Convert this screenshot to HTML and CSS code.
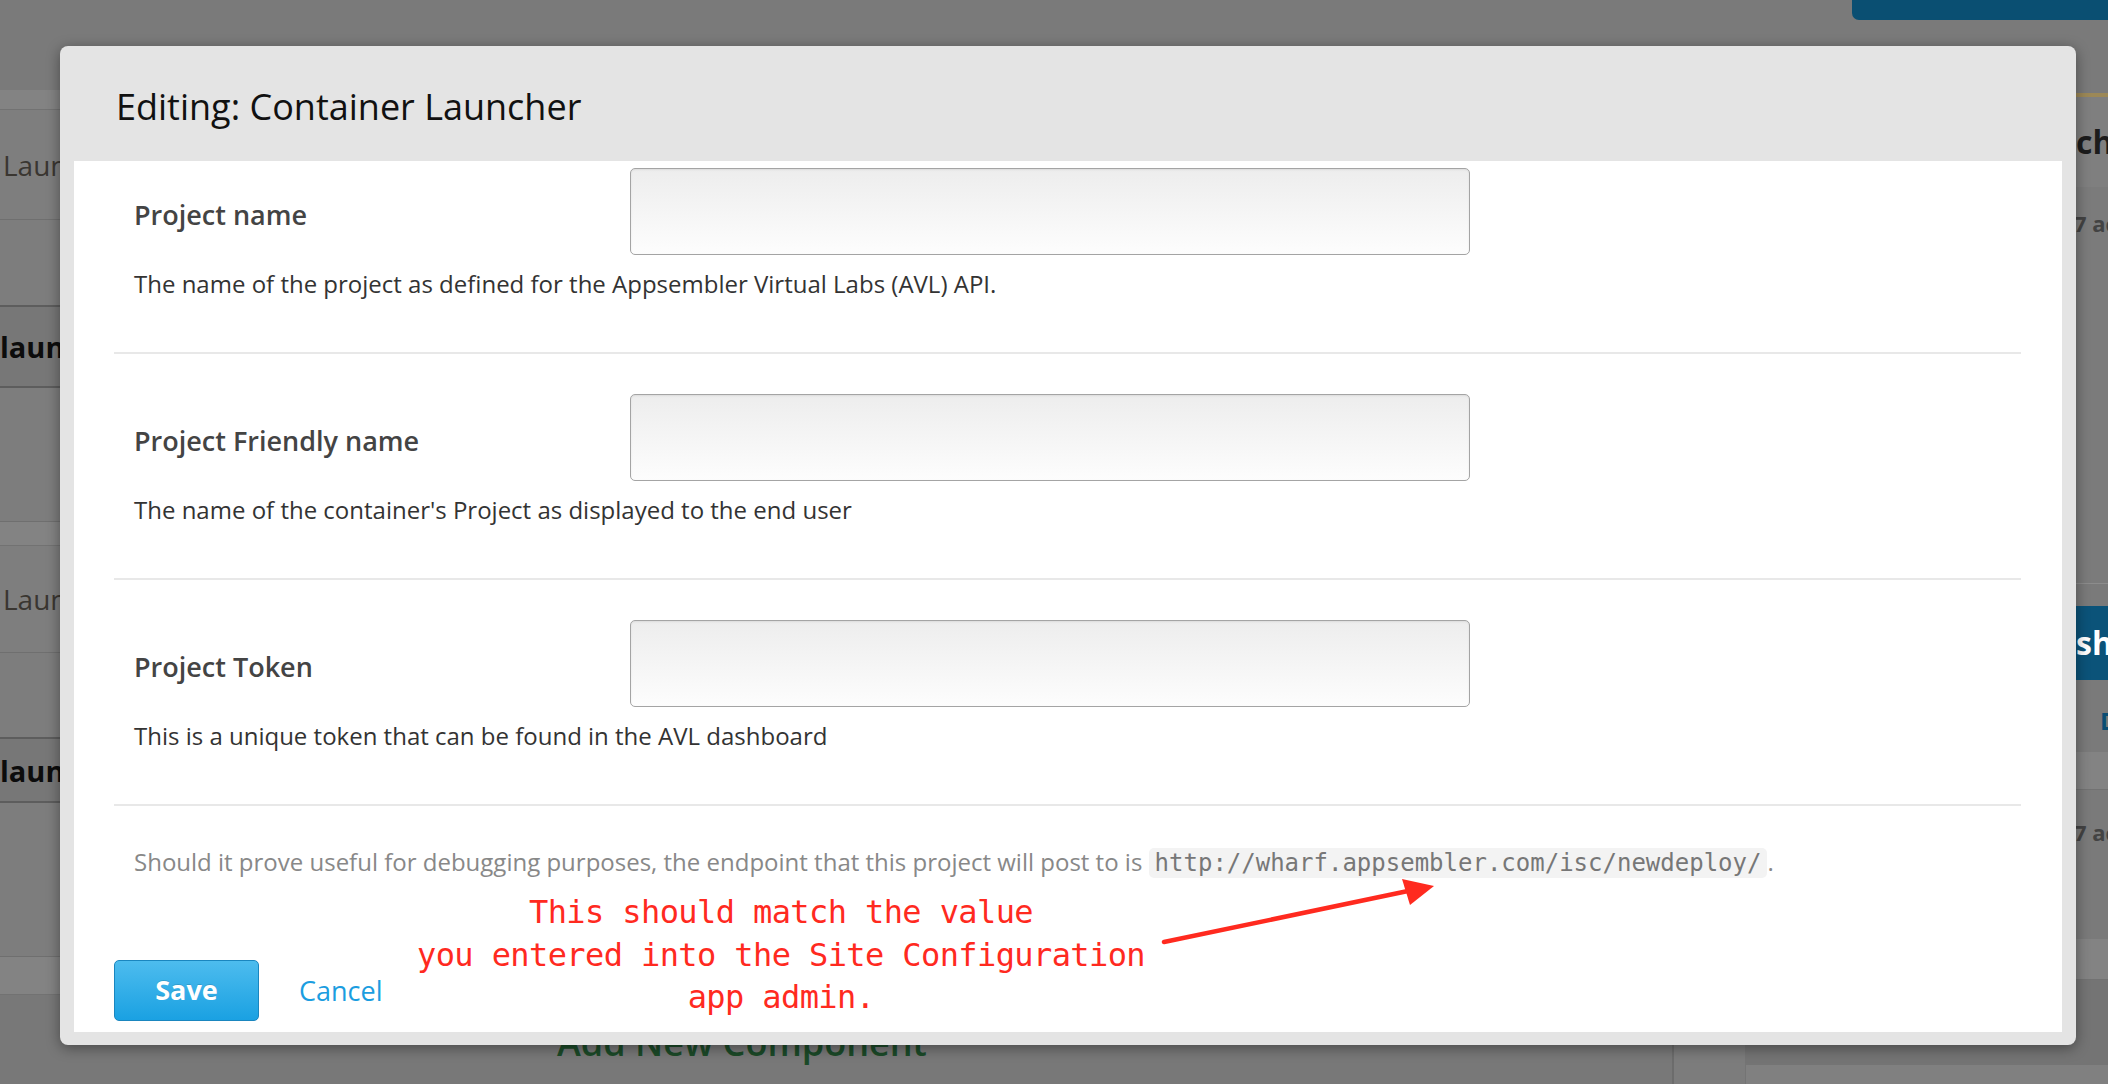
FILE: index.html
```html
<!DOCTYPE html>
<html lang="en">
<head>
<meta charset="utf-8">
<title>Editing: Container Launcher</title>
<link rel="stylesheet" href="styles.css">
</head>
<body>
<div class="page">
  <div class="page-header">
    <div class="header-btn"></div>
  </div>
  <div class="page-content">
    <div class="main-col">
      <div class="band band-1"></div>
      <div class="item-title item-title-1"><span>Launcher</span></div>
      <div class="item-blank item-blank-1"></div>
      <div class="item-head item-head-1"><span>launcher</span></div>
      <div class="item-body item-body-1"></div>
      <div class="band band-2"></div>
      <div class="item-title item-title-2"><span>Launcher</span></div>
      <div class="item-blank item-blank-2"></div>
      <div class="item-head item-head-2"><span>launcher</span></div>
      <div class="item-body item-body-2"></div>
      <div class="band band-3"></div>
      <div class="add-area"><span class="add-link">Add New Component</span></div>
    </div>
    <div class="gutter"></div>
    <div class="side-col">
      <div class="side-top"></div>
      <div class="side-card">
        <div class="side-card-head">changes</div>
        <div class="side-card-meta">7 actions</div>
      </div>
      <div class="side-publish">share</div>
      <div class="side-link">Details</div>
      <div class="band side-band"></div>
      <div class="side-meta-2">7 actions</div>
      <div class="band side-band-2"></div>
      <div class="side-rest"></div>
      <div class="side-foot"></div>
    </div>
  </div>
</div>

<div class="modal">
  <div class="modal-header">
    <h1 class="modal-title">Editing: Container Launcher</h1>
  </div>
  <div class="modal-body">
    <div class="field field-first">
      <div class="field-line">
        <label class="field-label">Project name</label>
        <div class="field-input"></div>
      </div>
      <p class="field-help">The name of the project as defined for the Appsembler Virtual Labs (AVL) API.</p>
    </div>
    <div class="field">
      <div class="field-line">
        <label class="field-label">Project Friendly name</label>
        <div class="field-input"></div>
      </div>
      <p class="field-help">The name of the container's Project as displayed to the end user</p>
    </div>
    <div class="field">
      <div class="field-line">
        <label class="field-label">Project Token</label>
        <div class="field-input"></div>
      </div>
      <p class="field-help">This is a unique token that can be found in the AVL dashboard</p>
    </div>
    <p class="note">Should it prove useful for debugging purposes, the endpoint that this project will post to is <code>http://wharf.appsembler.com/isc/newdeploy/</code>.</p>
    <div class="actions">
      <button class="btn-save" type="button">Save</button>
      <a class="link-cancel" href="#">Cancel</a>
    </div>

    <p class="annot">This should match the value<br>you entered into the Site Configuration<br>app admin.</p>
    <svg class="annot-arrow" width="300" height="90" viewBox="0 0 300 90">
      <line x1="10" y1="71" x2="254" y2="20" stroke="#ff2a1f" stroke-width="4.5" stroke-linecap="round"/>
      <polygon points="280,15 248,8 256,34" fill="#ff2a1f"/>
    </svg>
  </div>
</div>
</body>
</html>
```

FILE: styles.css
```css
* { box-sizing: border-box; }
html, body { margin: 0; padding: 0; }
body {
  width: 2108px;
  height: 1084px;
  overflow: hidden;
  position: relative;
  background: #7a7a7a;
  font-family: "Open Sans", "DejaVu Sans", sans-serif;
}

/* ---------- dimmed page behind the dialog ---------- */
.page {
  display: flex;
  flex-direction: column;
  height: 1084px;
  overflow: hidden;
}
.page-header {
  flex: none;
  height: 90px;
  display: flex;
  justify-content: flex-end;
  align-items: flex-start;
}
.header-btn {
  width: 256px;
  height: 20px;
  background: #0a4f72;
  border-radius: 0 0 0 7px;
}
.page-content {
  flex: 1;
  display: flex;
  min-height: 0;
}
.main-col {
  width: 1674px;
  flex: none;
  display: flex;
  flex-direction: column;
  border-right: 2px solid #6c6c6c;
}
.band { flex: none; background: #838383; border-bottom: 1px solid #727272; }
.band-1 { height: 20px; }
.band-2 { height: 24px; }
.band-3 { height: 38px; }

.item-title {
  flex: none;
  display: flex;
  align-items: center;
  padding-left: 3px;
  font-size: 28px;
  color: #3a3631;
  background: #7e7e7e;
  border-bottom: 1px solid #6f6f6f;
  white-space: nowrap;
}
.item-title-1 { height: 110px; }
.item-title-2 { height: 107px; }
.item-blank {
  flex: none;
  background: #7d7d7d;
  border-bottom: 2px solid #5d5d5d;
}
.item-blank-1 { height: 87px; }
.item-blank-2 { height: 86px; }
.item-head {
  flex: none;
  display: flex;
  align-items: center;
  font-size: 29px;
  font-weight: 700;
  color: #0c0c0c;
  background: #777777;
  border-bottom: 2px solid #5d5d5d;
  white-space: nowrap;
}
.item-head-1 { height: 81px; }
.item-head-2 { height: 64px; }
.item-body {
  flex: none;
  background: #7d7d7d;
  border-bottom: 1px solid #6f6f6f;
}
.item-body-1 { height: 134px; }
.item-body-2 { height: 154px; }
.add-area {
  flex: 1;
  background: #787878;
  padding: 27px 0 0 557px;
}
.add-link {
  font-size: 36px;
  font-weight: 600;
  color: #1b4a28;
  line-height: 42px;
  white-space: nowrap;
}

.gutter {
  width: 72px;
  flex: none;
  background: #7c7c7c;
  border-right: 1px solid #747474;
}
.side-col {
  flex: 1;
  display: flex;
  flex-direction: column;
  white-space: nowrap;
  overflow: hidden;
}
.side-top { height: 3px; flex: none; }
.side-card {
  flex: none;
  height: 491px;
  border-top: 4px solid #9c8857;
  border-bottom: 1px solid #8c8c8c;
  background: #7b7b7b;
}
.side-card-head {
  height: 90px;
  background: #7f7f7f;
  padding-left: 330px;
  font-size: 32px;
  font-weight: 700;
  color: #1c1c1c;
  line-height: 90px;
}
.side-card-meta {
  padding: 22px 0 0 328px;
  font-size: 22px;
  font-weight: 700;
  color: #434343;
  line-height: 28px;
}
.side-publish {
  flex: none;
  margin-top: 22px;
  height: 74px;
  background: #0b5379;
  color: #ffffff;
  font-size: 32px;
  font-weight: 700;
  line-height: 74px;
  padding-left: 330px;
}
.side-link {
  flex: none;
  height: 72px;
  padding-left: 354px;
  line-height: 82px;
  font-size: 24px;
  font-weight: 700;
  color: #0b4d73;
}
.side-band { height: 38px; }
.side-meta-2 {
  flex: none;
  height: 149px;
  padding: 28px 0 0 328px;
  font-size: 22px;
  font-weight: 700;
  color: #434343;
  line-height: 28px;
}
.side-band-2 { height: 41px; }
.side-rest { flex: none; height: 85px; background: #747474; }
.side-foot { flex: 1; background: #808080; }

/* ---------- dialog ---------- */
.modal {
  position: absolute;
  left: 60px;
  top: 46px;
  width: 2016px;
  height: 999px;
  background: #e4e4e4;
  border-radius: 8px;
  box-shadow: 0 3px 14px rgba(0, 0, 0, 0.4);
  display: flex;
  flex-direction: column;
}
.modal-header {
  flex: none;
  height: 115px;
  padding: 36px 56px 0;
}
.modal-title {
  margin: 0;
  font-size: 36px;
  line-height: 50px;
  font-weight: 400;
  color: #111111;
}
.modal-body {
  flex: 1;
  position: relative;
  margin: 0 14px 13px;
  background: #ffffff;
  padding: 0 41px 11px 40px;
}

.field {
  padding: 40px 0 54px 20px;
  border-bottom: 2px solid #e8e8e8;
}
.field-first { padding-top: 7px; }
.field-line {
  display: flex;
  align-items: center;
}
.field-label {
  width: 496px;
  flex: none;
  padding-top: 6px;
  font-size: 27px;
  font-weight: 600;
  color: #444444;
}
.field-input {
  width: 840px;
  height: 87px;
  border: 1px solid #a4a4a4;
  border-radius: 5px;
  background: linear-gradient(#ededed, #fdfdfd);
  box-shadow: inset 0 1px 2px rgba(0, 0, 0, 0.08);
}
.field-help {
  margin: 15px 0 0;
  font-size: 24px;
  line-height: 28px;
  color: #333333;
}

.note {
  margin: 0;
  padding: 41px 0 0 20px;
  font-size: 24px;
  line-height: 30px;
  color: #888888;
}
.note code {
  display: inline-block;
  font-family: "DejaVu Sans Mono", "Liberation Mono", monospace;
  font-size: 24px;
  line-height: 30px;
  padding: 0 6px;
  color: #777777;
  background: #f3f3f3;
  border-radius: 5px;
}

.actions {
  margin-top: 82px;
  display: flex;
  align-items: center;
  gap: 40px;
}
.btn-save {
  width: 145px;
  height: 61px;
  padding: 0 0 3px;
  border: 1px solid #1a86bf;
  border-radius: 5px;
  background: linear-gradient(#4dbcee, #1aa1e2);
  color: #ffffff;
  font-family: "Open Sans", sans-serif;
  font-size: 27px;
  font-weight: 700;
  text-shadow: 0 -1px 0 rgba(0, 0, 0, 0.12);
}
.link-cancel {
  font-size: 27px;
  color: #1b9de0;
  text-decoration: none;
}

/* ---------- screenshot annotation ---------- */
.annot {
  position: absolute;
  left: 307px;
  top: 730px;
  width: 800px;
  margin: 0;
  text-align: center;
  font-family: "DejaVu Sans Mono", "Liberation Mono", monospace;
  font-size: 32px;
  line-height: 42.5px;
  letter-spacing: -0.6px;
  color: #ff2a1f;
}
.annot-arrow {
  position: absolute;
  left: 1080px;
  top: 710px;
}
```
